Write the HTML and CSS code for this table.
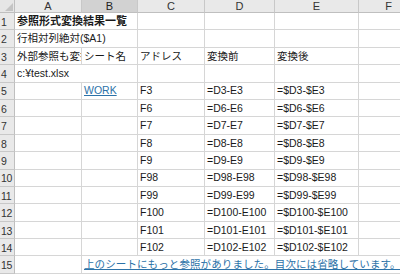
FILE: index.html
```html
<!DOCTYPE html>
<html lang="ja">
<head>
<meta charset="utf-8">
<link rel="stylesheet" href="styles.css">
</head>
<body>
<div class="sheet">
  <div class="corner"><span class="tri"></span></div>
  <div class="ch">A</div><div class="ch sel">B</div><div class="ch">C</div><div class="ch">D</div><div class="ch">E</div><div class="ch">F</div>

  <div class="rh">1</div><div class="c span2 bold">参照形式変換結果一覧</div><div class="c"></div><div class="c"></div><div class="c"></div><div class="c"></div>
  <div class="rh">2</div><div class="c span2">行相対列絶対($A1)</div><div class="c"></div><div class="c"></div><div class="c"></div><div class="c"></div>
  <div class="rh">3</div><div class="c clip"><span class="cliptext">外部参照も変換</span></div><div class="c">シート名</div><div class="c">アドレス</div><div class="c">変換前</div><div class="c">変換後</div><div class="c"></div>
  <div class="rh">4</div><div class="c span2">c:¥test.xlsx</div><div class="c"></div><div class="c"></div><div class="c"></div><div class="c"></div>
  <div class="rh">5</div><div class="c"></div><div class="c"><span class="link">WORK</span></div><div class="c">F3</div><div class="c">=D3-E3</div><div class="c">=$D3-$E3</div><div class="c"></div>
  <div class="rh">6</div><div class="c"></div><div class="c"></div><div class="c">F6</div><div class="c">=D6-E6</div><div class="c">=$D6-$E6</div><div class="c"></div>
  <div class="rh">7</div><div class="c"></div><div class="c"></div><div class="c">F7</div><div class="c">=D7-E7</div><div class="c">=$D7-$E7</div><div class="c"></div>
  <div class="rh">8</div><div class="c"></div><div class="c"></div><div class="c">F8</div><div class="c">=D8-E8</div><div class="c">=$D8-$E8</div><div class="c"></div>
  <div class="rh">9</div><div class="c"></div><div class="c"></div><div class="c">F9</div><div class="c">=D9-E9</div><div class="c">=$D9-$E9</div><div class="c"></div>
  <div class="rh">10</div><div class="c"></div><div class="c"></div><div class="c">F98</div><div class="c">=D98-E98</div><div class="c">=$D98-$E98</div><div class="c"></div>
  <div class="rh">11</div><div class="c"></div><div class="c"></div><div class="c">F99</div><div class="c">=D99-E99</div><div class="c">=$D99-$E99</div><div class="c"></div>
  <div class="rh">12</div><div class="c"></div><div class="c"></div><div class="c">F100</div><div class="c">=D100-E100</div><div class="c">=$D100-$E100</div><div class="c"></div>
  <div class="rh">13</div><div class="c"></div><div class="c"></div><div class="c">F101</div><div class="c">=D101-E101</div><div class="c">=$D101-$E101</div><div class="c"></div>
  <div class="rh">14</div><div class="c"></div><div class="c"></div><div class="c">F102</div><div class="c">=D102-E102</div><div class="c">=$D102-$E102</div><div class="c"></div>
  <div class="rh">15</div><div class="c"></div><div class="c span5"><span class="link note">上のシートにもっと参照がありました。目次には省略しています。</span></div>
</div>
</body>
</html>
```
FILE: styles.css
```css
html, body {
  margin: 0;
  padding: 0;
  background: #fff;
}
body {
  font-family: "Liberation Sans", "Noto Sans CJK JP", sans-serif;
  font-size: 10.5px;
  color: #1a1a1a;
  width: 400px;
  height: 275px;
  overflow: hidden;
}
.sheet {
  display: grid;
  grid-template-columns: 15px 67px 56px 67px 70px 84px 60px;
  grid-template-rows: 13px repeat(15, 17.4px);
}
.corner {
  background: #e6e6e6;
  border-right: 1px solid #bfbfbf;
  border-bottom: 1px solid #bfbfbf;
  position: relative;
}
.tri {
  position: absolute;
  right: 1px;
  bottom: 1px;
  width: 0;
  height: 0;
  border-left: 8px solid transparent;
  border-bottom: 8px solid #c4c4c4;
}
.ch {
  background: #e9e9e9;
  border-right: 1px solid #c8c8c8;
  border-bottom: 1px solid #bfbfbf;
  display: flex;
  align-items: center;
  justify-content: center;
  color: #333;
  font-size: 11px;
  line-height: 1;
}
.ch.sel {
  background: #d2d2d2;
  color: #222;
}
.rh {
  background: #e9e9e9;
  border-right: 1px solid #bfbfbf;
  border-bottom: 1px solid #c8c8c8;
  display: flex;
  align-items: flex-end;
  justify-content: flex-start;
  padding: 0 0 2px 1px;
  color: #333;
  font-size: 10.5px;
  line-height: 1;
  overflow: hidden;
  letter-spacing: -0.4px;
}
.c {
  border-right: 1px solid #d6d6d6;
  border-bottom: 1px solid #d6d6d6;
  display: flex;
  align-items: flex-end;
  padding: 0 0 2px 2px;
  white-space: nowrap;
  overflow: hidden;
  line-height: 1.1;
  min-width: 0;
}
.clip {
  padding-left: 0;
}
.cliptext {
  display: block;
  width: 64px;
  padding-left: 2px;
  overflow: hidden;
}
.span2 { grid-column: span 2; }
.span5 { grid-column: span 5; }
.bold {
  font-weight: bold;
  font-size: 11px;
}
.link {
  color: #2c72a8;
  text-decoration: underline;
}
.note {
  letter-spacing: 0.1px;
}
```
